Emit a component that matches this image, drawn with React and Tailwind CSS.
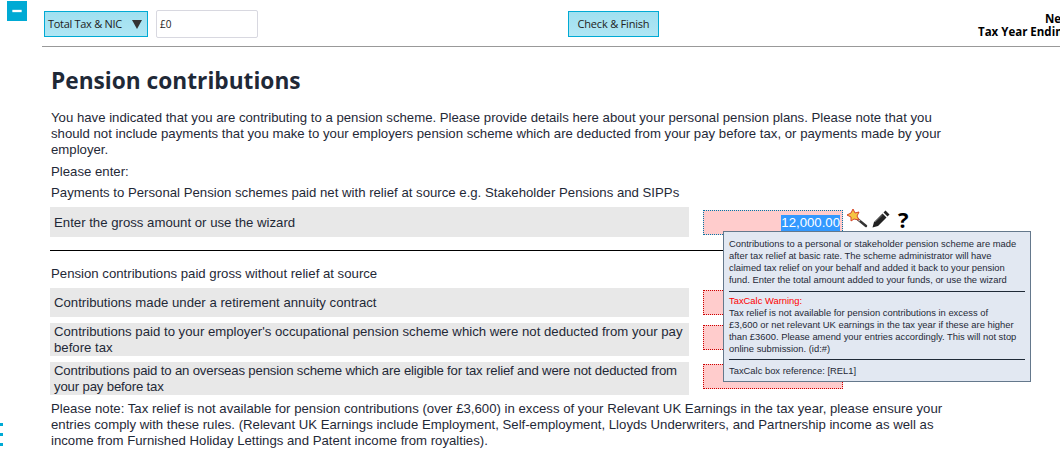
import React from 'react';
import { Minus } from 'lucide-react';

const sans = 'font-["Liberation_Sans",Arial,sans-serif]';

const Row = ({ children, tall, className = '' }) => (
  <div className="flex items-start w-[793px]">
    <div className={`w-[639px] shrink-0 bg-[#e8e8e8] px-1 text-[13.2px] leading-[16px] text-[#1f2937] flex items-center ${tall ? 'h-[33px]' : 'h-[29px]'} ${className}`}>
      <span>{children}</span>
    </div>
    <div className="ml-[14px] mt-[2px] w-[140px] h-[25px] bg-[#ffcccc] border border-dotted border-[#cc0000]"></div>
  </div>
);

const WandIcon = () => (
  <svg width="22" height="20" viewBox="0 0 22 20" className="shrink-0">
    <line x1="9" y1="8" x2="20" y2="17" stroke="#333" strokeWidth="2.5" strokeLinecap="round" />
    <line x1="9" y1="8" x2="14" y2="12" stroke="#bbb" strokeWidth="1.5" />
    <polygon points="7,0 9,4 13,3 11,7 13,11 8,10 5,12 5,8 1,6 5,4" fill="#f5c542" stroke="#d6452b" strokeWidth="1" />
  </svg>
);

const PencilIcon = () => (
  <svg width="18" height="18" viewBox="0 0 18 18" className="shrink-0">
    <path d="M13.5 0.5l4 4-2 2-4-4zM10.5 3.5l4 4-8.5 8.5-5.5 1.5 1.5-5.5z" fill="#222" />
    <line x1="3" y1="12" x2="10.5" y2="5" stroke="#777" strokeWidth="0.8" />
  </svg>
);

const App = () => {
  return (
    <div className={`relative w-[1060px] h-[465px] overflow-hidden bg-white ${sans}`}>
      {/* collapse button */}
      <div className="absolute left-[7px] top-[1px] w-[20px] h-[20px] bg-[#00aad4] flex items-center justify-center">
        <Minus size={16} strokeWidth={3.5} color="#fff" strokeLinecap="butt" />
      </div>

      {/* sidebar drag handle */}
      <div className="absolute left-0 top-[423px] flex flex-col gap-[7px]">
        <div className="w-[3px] h-[3px] bg-[#00aad4]"></div>
        <div className="w-[3px] h-[3px] bg-[#00aad4]"></div>
        <div className="w-[3px] h-[3px] bg-[#00aad4]"></div>
      </div>

      <div className="ml-[42px]">
        {/* Header */}
        <div className="relative h-[47px] border-b border-[#999] pt-[11px] flex items-start overflow-hidden font-['Open_Sans',sans-serif]">
          <div className="ml-[2px] w-[104px] h-[26px] border border-[#00aad4] bg-gradient-to-b from-[#a0e0f0] to-[#b0e6f4] flex items-center justify-between pl-[3px] pr-[5px] text-[11px] text-[#222]">
            <span className="whitespace-nowrap tracking-[-0.3px]">Total Tax &amp; NIC</span>
            <svg width="10" height="10" viewBox="0 0 10 10" className="shrink-0"><polygon points="0,1 10,1 5,10" fill="#333" /></svg>
          </div>
          <div className="ml-[8px] w-[102px] h-[28px] -mt-[1px] border border-[#d8d8e0] rounded-[2px] pl-[3px] flex items-center text-[10px] text-[#222]">£0</div>
          <div className="ml-[310px] w-[91px] h-[26px] border border-[#00aad4] bg-gradient-to-b from-[#a0e0f0] to-[#b0e6f4] flex items-center justify-center text-[11px] text-[#222] tracking-[-0.2px]">Check &amp; Finish</div>
          <div className="absolute left-[936px] top-[12px] w-[170px] text-[11.5px] leading-[13px] font-bold text-black">
            <div className="pl-[67px]">Net Tax</div>
            <div className="whitespace-nowrap">Tax Year Ending 5 April</div>
          </div>
        </div>

        {/* Content */}
        <div className="pl-[8px] relative">
          <h1 className="ml-[1px] mt-[18px] text-[22.7px] leading-[32px] font-bold text-[#1f2937] font-['Open_Sans',sans-serif]">Pension contributions</h1>
          <p className="ml-[1px] mt-[13px] w-[898px] text-[13.2px] leading-[16px] text-[#1f2937]">
            You have indicated that you are contributing to a pension scheme. Please provide details here about your personal pension plans. Please note that you should not include payments that you make to your employers pension scheme which are deducted from your pay before tax, or payments made by your employer.
          </p>
          <p className="ml-[1px] mt-[6px] text-[13.2px] leading-[16px] text-[#1f2937]">Please enter:</p>
          <p className="ml-[1px] mt-[5px] text-[13.2px] leading-[16px] text-[#1f2937]">Payments to Personal Pension schemes paid net with relief at source e.g. Stakeholder Pensions and SIPPs</p>

          <div className="mt-[6px] flex items-start">
            <div className="w-[639px] h-[30px] shrink-0 bg-[#e8e8e8] px-1 pt-[1px] text-[13.2px] leading-[16px] text-[#1f2937] flex items-center">Enter the gross amount or use the wizard</div>
            <div className="ml-[14px] mt-[3px] w-[140px] h-[25px] bg-[#ffcccc] border border-dotted border-[#0077aa] flex items-center justify-end pr-[2px] text-[13.2px] text-[#1f2937]">
              <span className="bg-[#3399ff] text-white leading-[16px]">12,000.00</span>
            </div>
            <div className="ml-[3px] mt-[1px] flex items-center gap-[4px]">
              <WandIcon />
              <PencilIcon />
              <span className="ml-[4px] text-[22px] leading-[22px] font-bold text-black font-['Open_Sans',sans-serif]">?</span>
            </div>
          </div>

          <div className="mt-[13px] w-[680px] border-t border-black"></div>

          <p className="ml-[1px] mt-[15px] text-[13.2px] leading-[16px] text-[#1f2937]">Pension contributions paid gross without relief at source</p>

          <div className="mt-[6px] flex flex-col gap-[6px]">
            <Row>Contributions made under a retirement annuity contract</Row>
            <Row tall>Contributions paid to your employer's occupational pension scheme which were not deducted from your pay before tax</Row>
            <Row tall className="tracking-[-0.17px]">Contributions paid to an overseas pension scheme which are eligible for tax relief and were not deducted from your pay before tax</Row>
          </div>

          <p className="ml-[1px] mt-[6px] w-[898px] text-[13.2px] leading-[16px] text-[#1f2937]">
            Please note: Tax relief is not available for pension contributions (over £3,600) in excess of your Relevant UK Earnings in the tax year, please ensure your entries comply with these rules. (Relevant UK Earnings include Employment, Self-employment, Lloyds Underwriters, and Partnership income as well as income from Furnished Holiday Lettings and Patent income from royalties).
          </p>
        </div>
      </div>

      {/* Help tooltip */}
      <div className="absolute left-[723px] top-[231px] w-[308px] h-[151px] bg-[#e2e8f2] border border-[#64788c] px-[5px] pt-[6px] text-[9.4px] leading-[12px] text-[#1f2937]">
        <p>Contributions to a personal or stakeholder pension scheme are made after tax relief at basic rate. The scheme administrator will have claimed tax relief on your behalf and added it back to your pension fund. Enter the total amount added to your funds, or use the wizard</p>
        <div className="mt-[5px] mb-[3px] border-t border-[#1f2937]"></div>
        <p className="text-[#ff0000]">TaxCalc Warning:</p>
        <p className="w-[288px]">Tax relief is not available for pension contributions in excess of £3,600 or net relevant UK earnings in the tax year if these are higher than £3600. Please amend your entries accordingly. This will not stop online submission. (id:#)</p>
        <div className="mt-[4px] mb-[5px] border-t border-[#1f2937]"></div>
        <p>TaxCalc box reference: [REL1]</p>
      </div>
    </div>
  );
};

export default App;
